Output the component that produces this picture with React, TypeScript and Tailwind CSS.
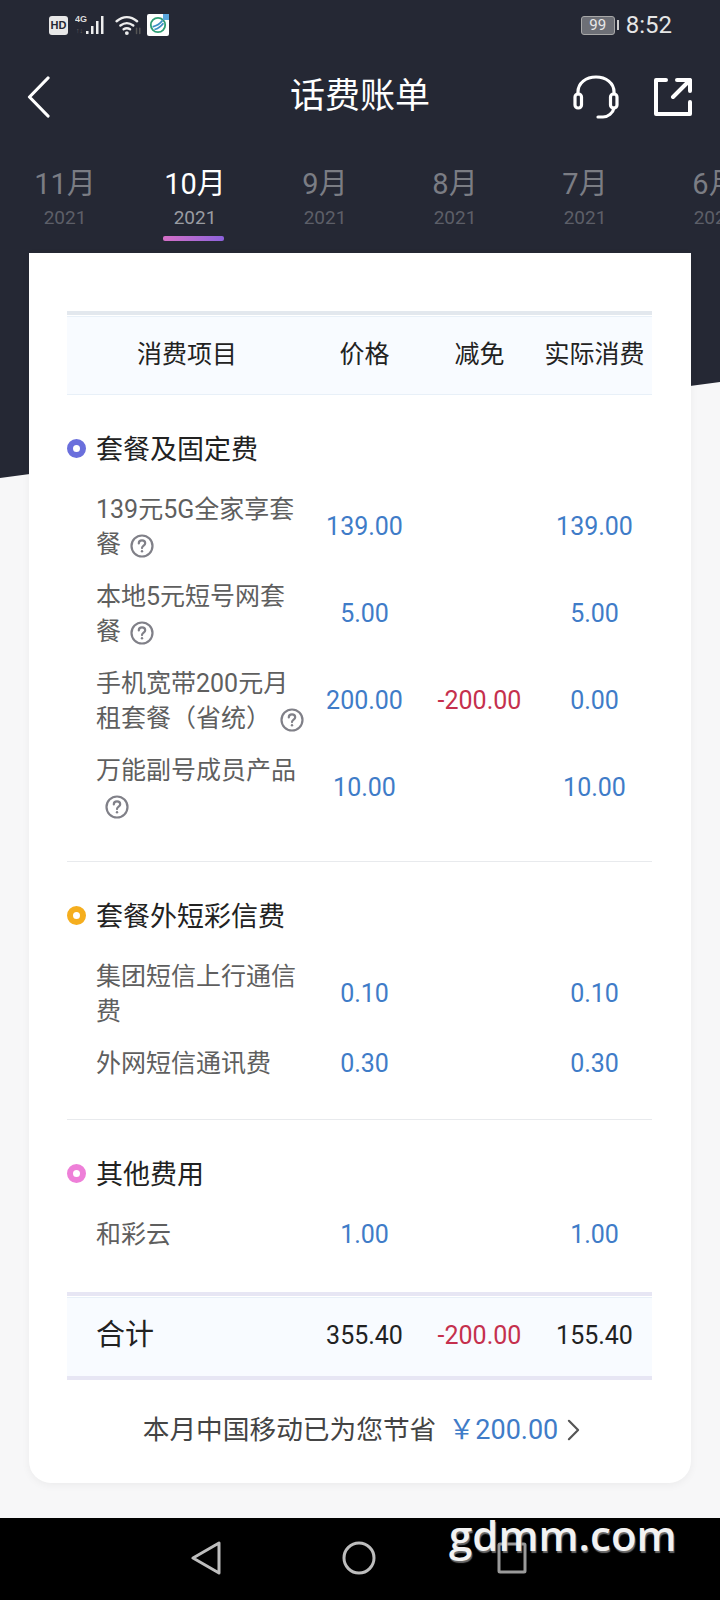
const font = "font-['Roboto','Noto_Sans_CJK_SC',sans-serif]";

const tabs = [
  { month: "11月", active: false },
  { month: "10月", active: true },
  { month: "9月", active: false },
  { month: "8月", active: false },
  { month: "7月", active: false },
  { month: "6月", active: false },
];

type Item = { name: string; price: string; off?: string; real: string; tip?: boolean };

const sections: { title: string; dot: string; pb: string; headGap: string; rowGap: string; items: Item[] }[] = [
  {
    title: "套餐及固定费",
    dot: "border-[#6a6fdc]",
    pb: "pb-[21px] border-b border-[#e8eaed]",
    headGap: "mb-[27px]",
    rowGap: "mb-[17px]",
    items: [
      { name: "139元5G全家享套餐", price: "139.00", real: "139.00", tip: true },
      { name: "本地5元短号网套餐", price: "5.00", real: "5.00", tip: true },
      { name: "手机宽带200元月租套餐（省统）", price: "200.00", off: "-200.00", real: "0.00", tip: true },
      { name: "万能副号成员产品", price: "10.00", real: "10.00", tip: true },
    ],
  },
  {
    title: "套餐外短彩信费",
    dot: "border-[#f5ae1e]",
    pb: "pb-[20px] border-b border-[#e8eaed]",
    headGap: "mb-[27px]",
    rowGap: "mb-[16px]",
    items: [
      { name: "集团短信上行通信费", price: "0.10", real: "0.10" },
      { name: "外网短信通讯费", price: "0.30", real: "0.30" },
    ],
  },
  {
    title: "其他费用",
    dot: "border-[#ee7fd8]",
    pb: "pb-[23px]",
    headGap: "mb-[26px]",
    rowGap: "mb-[16px]",
    items: [{ name: "和彩云", price: "1.00", real: "1.00" }],
  },
];

function Tip() {
  return (
    <svg viewBox="0 0 24 24" className="inline-block w-[24px] h-[24px] ml-[9px] align-[-5px]" fill="none" stroke="#808088" strokeWidth="2.2">
      <circle cx="12" cy="12" r="10.5" />
      <path d="M8.8 9.5c0-2 1.4-3.1 3.2-3.1s3.2 1.1 3.2 2.8c0 2.4-3.2 2.4-3.2 4.9" strokeLinecap="round" />
      <circle cx="12" cy="17.3" r="1.2" fill="#808088" stroke="none" />
    </svg>
  );
}

function StatusBar() {
  return (
    <div className="h-[50px] flex items-center justify-between pl-[49px] pr-[48px]">
      <div className="flex items-center gap-[4px]">
        <div className="w-[19px] h-[19px] bg-[#e8e8e8] rounded-[3px] text-[#252834] text-[11px] font-bold leading-[19px] text-center font-['Liberation_Sans',sans-serif]">HD</div>
        <svg viewBox="0 0 34 24" className="w-[34px] h-[24px] ml-[3px]">
          <text x="0" y="9" fontSize="9" fontWeight="700" fill="#ddd" fontFamily="Liberation Sans">4G</text>
          <text x="1" y="20" fontSize="7" fill="#666" fontFamily="Liberation Sans">↑↓</text>
          <rect x="11" y="18" width="2.5" height="3" fill="#eee" />
          <rect x="16" y="13" width="2.5" height="8" fill="#eee" />
          <rect x="21" y="8" width="2.5" height="13" fill="#eee" />
          <rect x="26" y="3" width="2.5" height="18" fill="#eee" />
        </svg>
        <svg viewBox="0 0 26 20" className="w-[28px] h-[22px] ml-[2px]" fill="none" stroke="#eee" strokeWidth="2.2" strokeLinecap="round">
          <path d="M1.5 6.5c6-5 13-5 19 0" />
          <path d="M5 10.5c4-3 8-3 12 0" />
          <path d="M8 14c2-1.4 4-1.4 6 0" />
          <circle cx="11" cy="17.5" r="1.8" fill="#eee" stroke="none" />
          <path d="M20 13v5M23 13v5" stroke="#555" strokeWidth="1.4" />
        </svg>
        <div className="relative w-[22px] h-[22px] bg-white rounded-[2px] flex items-center justify-center">
          <svg viewBox="0 0 20 20" className="w-[18px] h-[18px]" fill="none" stroke="#2f9e74" strokeWidth="2">
            <circle cx="10" cy="10" r="8" />
            <path d="M4 12c4-1 8-3 11-7M6 15c4-1 7-3 10-7" stroke="#3b8fc4" />
          </svg>
          <div className="absolute right-0 top-0 w-[6px] h-[6px] bg-[#5aa6dc]" />
        </div>
      </div>
      <div className="flex items-center gap-[7px]">
        <div className="flex items-center gap-[2px]">
          <div className="w-[34px] h-[19px] border border-[#a8a8a8] rounded-[3px] bg-[#6d6f76] text-[#e8e8e8] text-[15px] leading-[17px] text-center">99</div>
          <div className="w-[2px] h-[10px] bg-[#ccc]" />
        </div>
        <div className="text-[24px] leading-[30px] text-[#e6e6e6]">8:52</div>
      </div>
    </div>
  );
}

function NavBar() {
  return (
    <div className="h-[90px] relative flex items-center justify-between pl-[27px] pr-[28px] pt-[4px]">
      <svg viewBox="0 0 24 42" className="w-[24px] h-[42px]" fill="none" stroke="#fff" strokeWidth="3.2" strokeLinecap="round" strokeLinejoin="round">
        <path d="M21 2 2.5 21 21 40" />
      </svg>
      <div className="absolute inset-x-0 text-center text-[35px] leading-[44px] text-white">话费账单</div>
      <div className="flex items-center gap-[35px]">
        <svg viewBox="0 0 46 44" className="w-[46px] h-[44px]" fill="none" stroke="#fff" strokeWidth="3.2" strokeLinecap="round">
          <path d="M5 19v-2C5 8 13 2 23 2s18 6 18 15v2" />
          <rect x="2" y="19" width="6.5" height="14" rx="3" />
          <rect x="37.5" y="19" width="6.5" height="14" rx="3" />
          <path d="M41 33c-1 5-6 9-11 9h-5" />
        </svg>
        <svg viewBox="0 0 38 38" className="w-[38px] h-[38px]" fill="none" stroke="#fff" strokeWidth="4" strokeLinecap="round" strokeLinejoin="round">
          <path d="M12 2H2v34h34V24" />
          <path d="M36 2v11M23 2h13M36 2 19 19" />
        </svg>
      </div>
    </div>
  );
}

function Tabs() {
  return (
    <div className="h-[113px] flex overflow-hidden">
      {tabs.map((t) => (
        <div key={t.month} className="w-[130px] shrink-0 flex flex-col items-center pt-[26px]">
          <div className={`text-[29px] leading-[36px] ${t.active ? "text-white" : "text-[#7b7d84]"}`}>{t.month}</div>
          <div className={`text-[19px] leading-[24px] mt-[4px] ${t.active ? "text-[#9a9ca2]" : "text-[#5d5f68]"}`}>2021</div>
          {t.active && (
            <div className="w-[61px] h-[5px] mt-[6px] -ml-[3px] rounded-[2px] bg-gradient-to-r from-[#d56fc6] to-[#8d62dc]" />
          )}
        </div>
      ))}
    </div>
  );
}

function Row({ item, gap }: { item: Item; gap: string }) {
  return (
    <div className={`grid grid-cols-[240px_115px_115px_115px] items-center ${gap}`}>
      <div className="pl-[29px] text-[25px] leading-[35px] text-[#5f5f5f]">
        {item.name}
        {item.tip && <Tip />}
      </div>
      <div className="text-center text-[25px] text-[#3f7cc8]">{item.price}</div>
      <div className="text-center text-[25px] text-[#c5304d]">{item.off}</div>
      <div className="text-center text-[25px] text-[#3f7cc8]">{item.real}</div>
    </div>
  );
}

export default function App() {
  return (
    <div className={`relative w-[720px] h-[1600px] overflow-hidden bg-[#f7f7f8] flex flex-col ${font}`}>
      <div className="absolute inset-x-0 top-0 h-[480px] bg-[#252834] [clip-path:polygon(0_0,100%_0,100%_382px,0_478px)]" />
      <div className="relative flex-1 flex flex-col">
        <StatusBar />
        <NavBar />
        <Tabs />
        <div className="mx-[29px] h-[1230px] bg-white rounded-b-[22px] shadow-[0_2px_8px_rgba(0,0,0,0.05)] pl-[38px] pr-[39px] pt-[58px]">
          <div className="h-[4px] bg-[#e3e8ee]" />
          <div className="h-[79px] mt-[1px] pb-[2px] bg-[#f8fbff] border-t border-b border-[#e8f0f8] grid grid-cols-[240px_115px_115px_115px] items-center text-center text-[25px] text-[#222]">
            <div>消费项目</div>
            <div>价格</div>
            <div>减免</div>
            <div>实际消费</div>
          </div>
          {sections.map((s) => (
            <div key={s.title} className={`pt-[40px] ${s.pb}`}>
              <div className={`flex items-center gap-[10px] h-[30px] ${s.headGap}`}>
                <div className={`w-[19px] h-[19px] -mt-[3px] rounded-full border-[6px] bg-white ${s.dot}`} />
                <div className="text-[27px] leading-[30px] text-[#222]">{s.title}</div>
              </div>
              {s.items.map((it) => (
                <Row key={it.name} item={it} gap={s.rowGap} />
              ))}
            </div>
          ))}
          <div className="h-[4px] bg-[#e7e6f4]" />
          <div className="h-[79px] mt-[1px] pb-[2px] bg-[#f8fbff] border-t border-[#e8f0f8] grid grid-cols-[240px_115px_115px_115px] items-center text-center text-[25px]">
            <div className="pl-[29px] text-left text-[29px] text-[#222]">合计</div>
            <div className="text-[#222]">355.40</div>
            <div className="text-[#c5304d]">-200.00</div>
            <div className="text-[#222]">155.40</div>
          </div>
          <div className="h-[4px] bg-[#e7e6f4]" />
          <div className="flex items-center justify-center h-[100px] pl-[4px] text-[26.7px]">
            <span className="text-[#444]">本月中国移动已为您节省</span>
            <span className="ml-[12px] text-[27px] text-[#3f7cc8]">￥200.00</span>
            <svg viewBox="0 0 14 24" className="w-[13px] h-[22px] ml-[9px]" fill="none" stroke="#555" strokeWidth="2.4" strokeLinecap="round" strokeLinejoin="round">
              <path d="M2 2l10 10L2 22" />
            </svg>
          </div>
        </div>
      </div>
      <div className="relative h-[82px] bg-black shrink-0 flex items-center">
        <div className="flex items-center justify-center w-full gap-[121px] -mt-[2px] -ml-[1px]">
          <svg viewBox="0 0 30 34" className="w-[30px] h-[34px]" fill="none" stroke="#bdbdbd" strokeWidth="3" strokeLinejoin="round">
            <path d="M28 2v30L2 17z" />
          </svg>
          <svg viewBox="0 0 34 34" className="w-[34px] h-[34px]" fill="none" stroke="#bdbdbd" strokeWidth="3">
            <circle cx="17" cy="17" r="15" />
          </svg>
          <svg viewBox="0 0 30 32" className="w-[30px] h-[32px]" fill="none" stroke="#9a9a9a" strokeWidth="3" strokeLinejoin="round">
            <rect x="2" y="2" width="26" height="28" rx="1" />
          </svg>
        </div>
        <div className="absolute left-[449px] -top-[8px] text-[42px] leading-[50px] font-semibold text-[#f2f2f2] font-['Open_Sans',sans-serif] [text-shadow:1px_2px_1px_rgba(120,120,120,0.9)]">gdmm.com</div>
      </div>
    </div>
  );
}
